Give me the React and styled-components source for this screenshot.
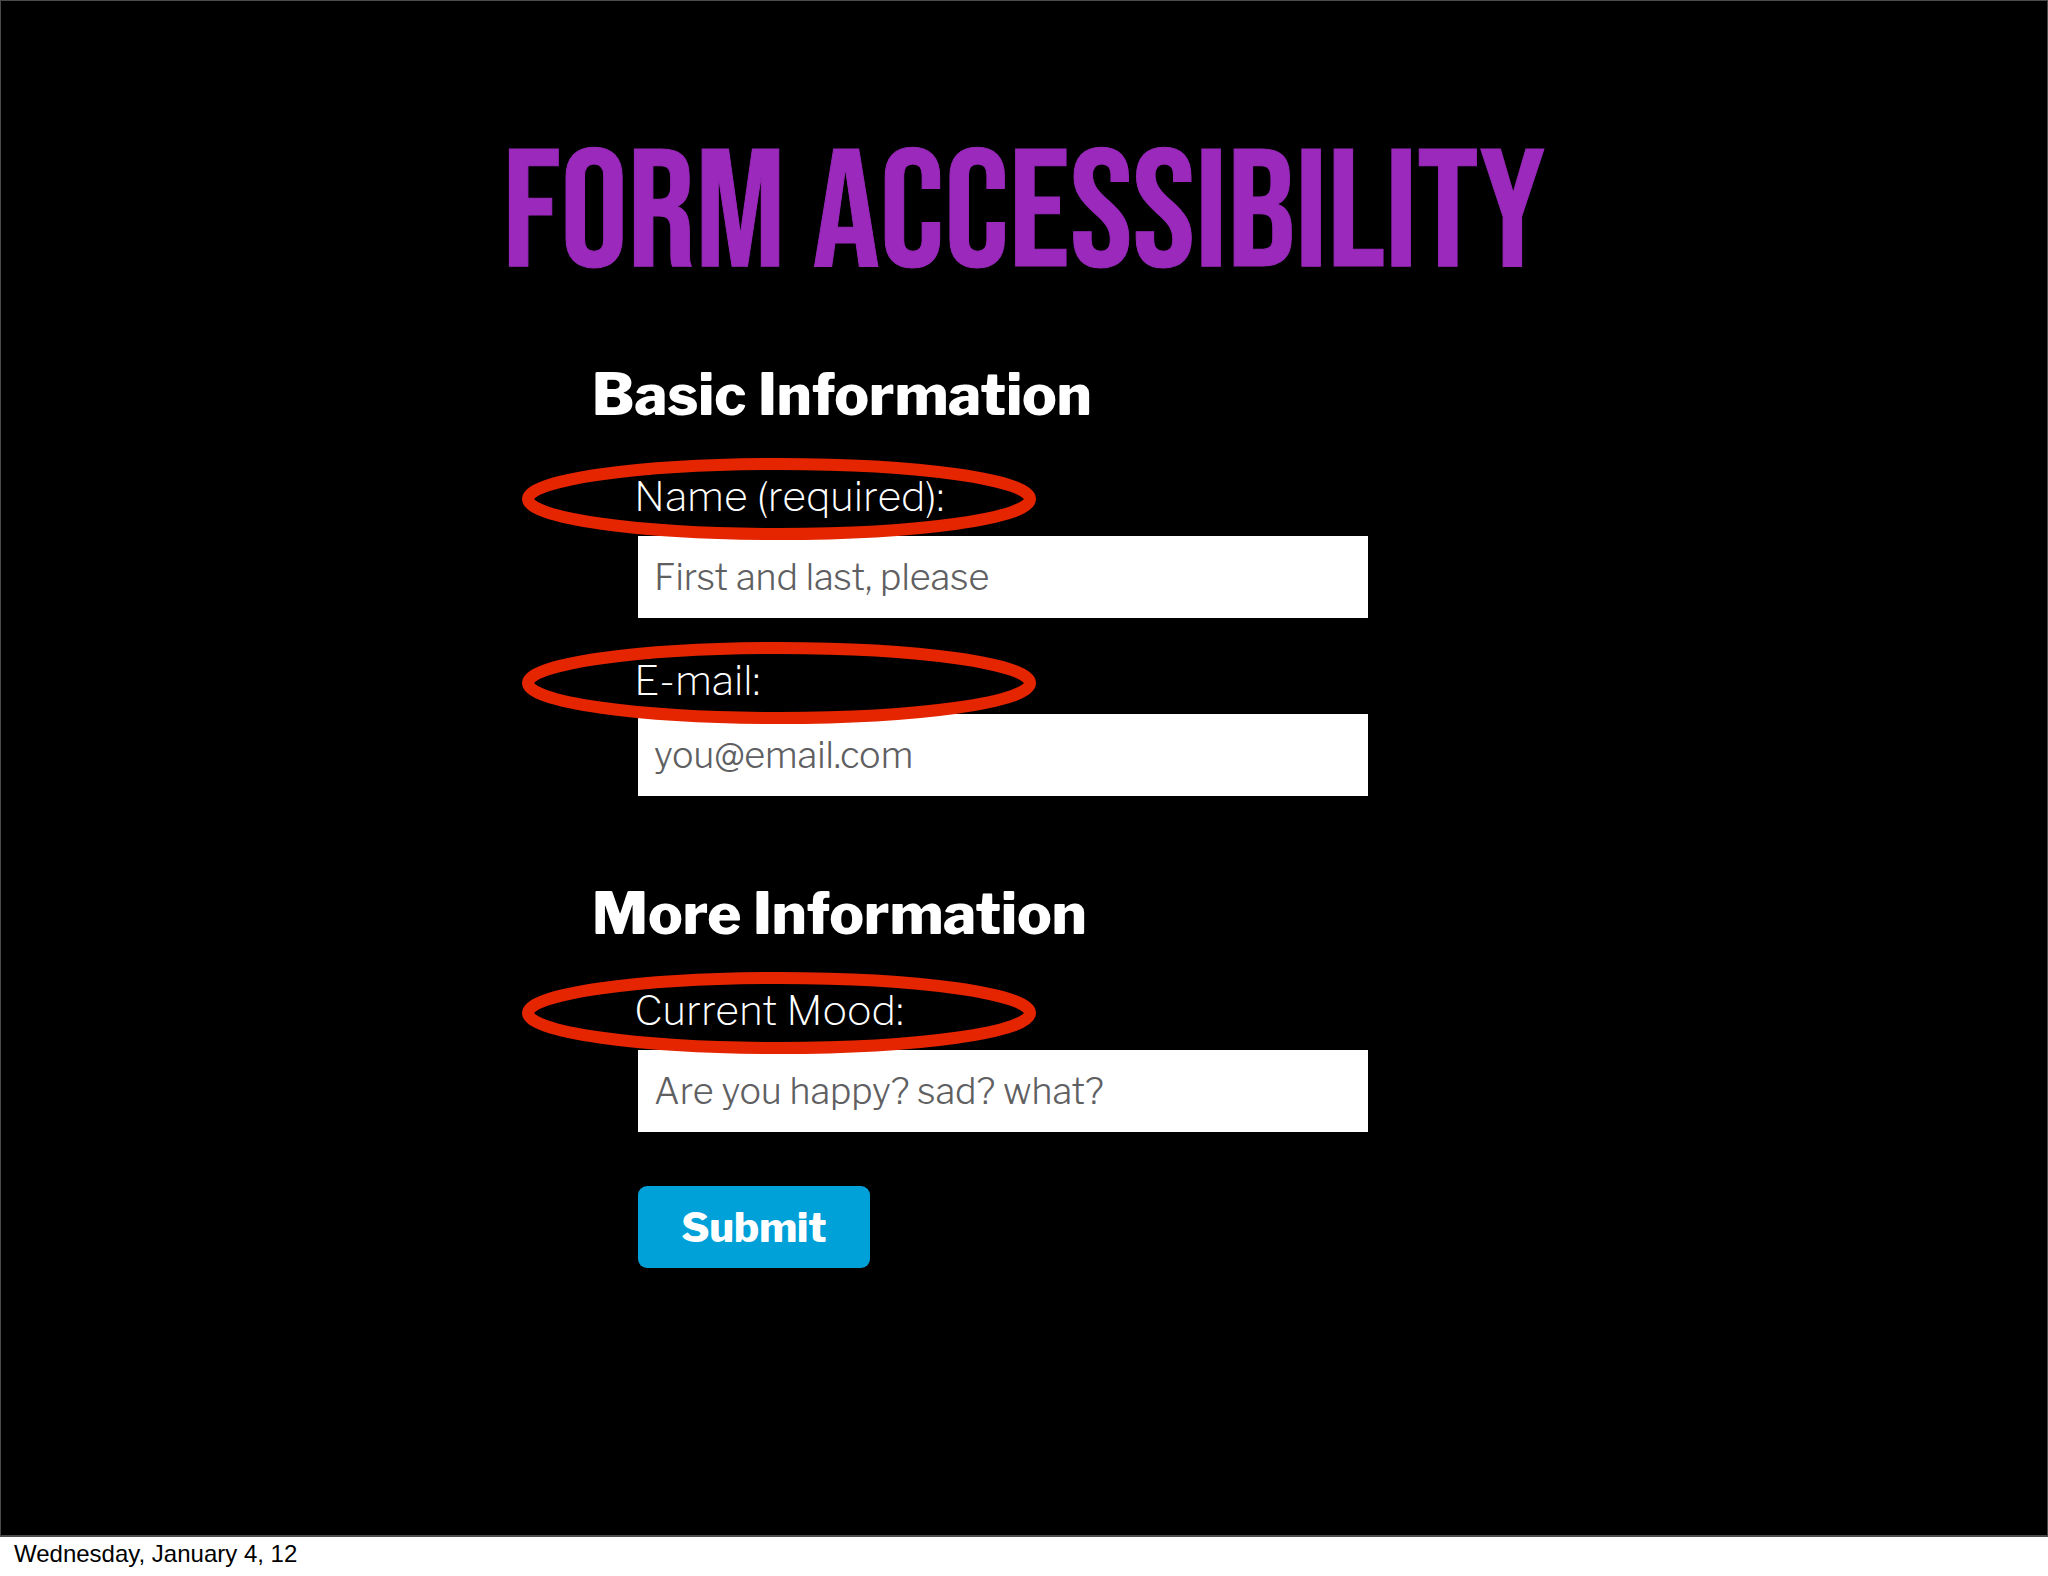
import React from 'react';
import styled, { createGlobalStyle } from 'styled-components';

const GlobalStyle = createGlobalStyle`
  *, *::before, *::after {
    box-sizing: border-box;
  }
  body {
    margin: 0;
    background: #ffffff;
  }
`;

const bodyFont = "'Libre Franklin', Inter, 'Open Sans', sans-serif";

const Page = styled.div`
  display: flex;
  flex-direction: column;
  min-height: 100vh;
`;

const Slide = styled.main`
  flex: 1;
  display: flex;
  flex-direction: column;
  align-items: center;
  padding: 131px 0 64px;
  background: #000000;
  border: 1px solid #4a4a4a;
  border-bottom-width: 2px;
`;

const Title = styled.h1`
  margin: 0 0 62px;
  color: #9a29bc;
  font-family: 'Bebas Neue', 'Roboto Condensed', 'Liberation Sans', sans-serif;
  font-size: 168px;
  font-weight: 400;
  line-height: 168px;
  text-align: center;
  text-transform: uppercase;
  -webkit-text-stroke: 1px #9a29bc;
`;

const Form = styled.form`
  display: flex;
  flex-direction: column;
  gap: 85px;
  width: 100%;
  max-width: 864px;
  padding-right: 88px;
  font-family: ${bodyFont};
`;

const Section = styled.section`
  display: flex;
  flex-direction: column;
  gap: ${(p) => p.$gap}px;
`;

const SectionTitle = styled.h2`
  margin: 0;
  color: #ffffff;
  font-size: 58px;
  font-weight: 800;
  line-height: 64px;
`;

const Fields = styled.div`
  display: flex;
  flex-direction: column;
  gap: 38px;
  padding-left: 42px;
`;

const FieldBox = styled.div`
  position: relative;
  display: flex;
  flex-direction: column;
  gap: ${(p) => p.$gap}px;
`;

const Label = styled.label`
  color: #ffffff;
  font-size: 41px;
  font-weight: 240;
  line-height: 48px;
`;

const TextInput = styled.input`
  height: 82px;
  margin: 0 0 0 4px;
  padding: 0 16px;
  border: 0;
  border-radius: 0;
  background: #ffffff;
  color: #5f6062;
  font-family: ${bodyFont};
  font-size: 36px;
  font-weight: 350;

  &::placeholder {
    color: #5f6062;
    opacity: 1;
  }
`;

const Ring = styled.svg`
  position: absolute;
  top: -14px;
  left: -112px;
  width: 514px;
  height: 82px;
  pointer-events: none;
`;

const SubmitButton = styled.button`
  align-self: flex-start;
  width: 232px;
  height: 82px;
  margin: 16px 0 0 4px;
  padding: 0;
  border: 0;
  border-radius: 9px;
  background: #00a1d9;
  color: #ffffff;
  font-family: ${bodyFont};
  font-size: 41px;
  font-weight: 800;
  cursor: pointer;
`;

const Footer = styled.footer`
  padding: 3px 14px 8px;
  color: #000000;
  font-family: 'Liberation Sans', Arial, sans-serif;
  font-size: 24px;
  line-height: 28px;
`;

function Field({ id, label, placeholder, type = 'text', gap = 16, required = false }) {
  return (
    <FieldBox $gap={gap}>
      <Label htmlFor={id}>{label}</Label>
      <TextInput id={id} name={id} type={type} placeholder={placeholder} required={required} />
      <Ring viewBox="0 0 514 82" aria-hidden="true">
        <ellipse cx="257" cy="41" rx="251" ry="35" fill="none" stroke="#e52400" strokeWidth="12" />
      </Ring>
    </FieldBox>
  );
}

export default function App() {
  return (
    <Page>
      <GlobalStyle />
      <Slide>
        <Title>Form Accessibility</Title>
        <Form onSubmit={(event) => event.preventDefault()}>
          <Section $gap={46}>
            <SectionTitle>Basic Information</SectionTitle>
            <Fields>
              <Field id="name" label="Name (required):" placeholder="First and last, please" required />
              <Field id="email" type="email" label="E-mail:" placeholder="you@email.com" gap={10} />
            </Fields>
          </Section>
          <Section $gap={41}>
            <SectionTitle>More Information</SectionTitle>
            <Fields>
              <Field id="mood" label="Current Mood:" placeholder="Are you happy? sad? what?" />
              <SubmitButton type="submit">Submit</SubmitButton>
            </Fields>
          </Section>
        </Form>
      </Slide>
      <Footer>Wednesday, January 4, 12</Footer>
    </Page>
  );
}
